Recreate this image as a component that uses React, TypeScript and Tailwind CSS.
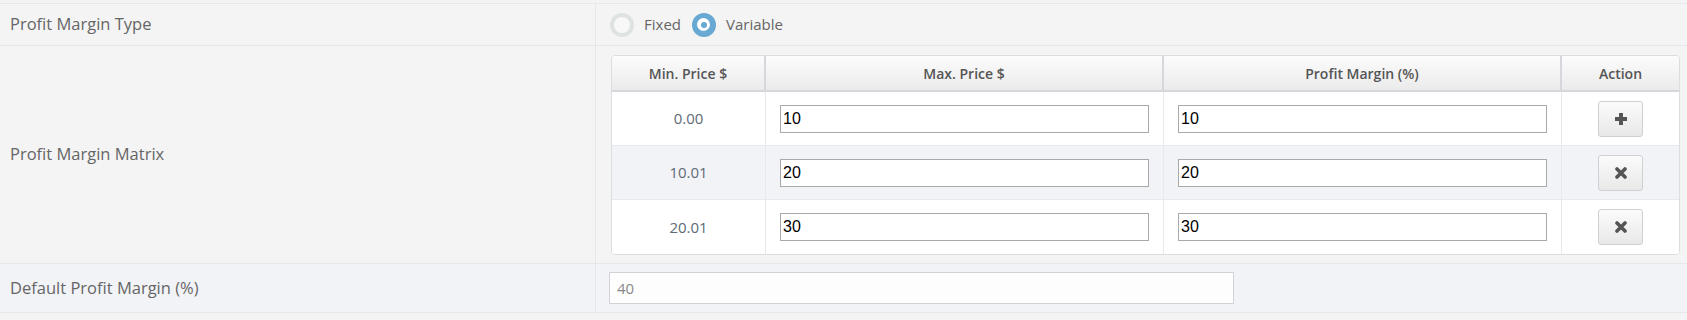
const rows = [
  { min: '0.00', max: '10', margin: '10', action: 'add' },
  { min: '10.01', max: '20', margin: '20', action: 'remove' },
  { min: '20.01', max: '30', margin: '30', action: 'remove' },
];

function PlusIcon() {
  return (
    <svg width="14" height="14" viewBox="0 0 14 14">
      <path d="M7 1v12M1 7h12" stroke="#555" strokeWidth="4" />
    </svg>
  );
}

function TimesIcon() {
  return (
    <svg width="12" height="12" viewBox="0 0 12 12">
      <path d="M2 2l8 8M10 2l-8 8" stroke="#555" strokeWidth="3.6" strokeLinecap="round" />
    </svg>
  );
}

function Radio({ checked }: { checked: boolean }) {
  if (checked) {
    return (
      <span className="flex h-[24px] w-[24px] items-center justify-center rounded-full bg-[#68a9d4]">
        <span className="flex h-[13px] w-[13px] items-center justify-center rounded-full bg-white">
          <span className="h-[6px] w-[6px] rounded-full bg-[#68a9d4]" />
        </span>
      </span>
    );
  }
  return <span className="h-[24px] w-[24px] rounded-full border-[4px] border-[#dfe2e3] bg-[#f8f8f8]" />;
}

function Label({ children }: { children: React.ReactNode }) {
  return (
    <div className="flex w-[596px] shrink-0 items-center border-r border-[#e6e7e9] pl-[10px] text-[16.5px] text-[#666]">
      {children}
    </div>
  );
}

export default function App() {
  return (
    <div className="min-h-[320px] w-full bg-[#f4f4f4] font-['Open_Sans',sans-serif]">
      <div className="h-[3px]" />
      <div className="border-t border-[#e6e7e9]">
        {/* Profit margin type */}
        <div className="flex h-[42px] border-b border-[#e6e7e9]">
          <Label>Profit Margin Type</Label>
          <div className="flex items-center pl-[14px] text-[15px] text-[#666]">
            <Radio checked={false} />
            <span className="ml-[10px]">Fixed</span>
            <span className="ml-[11px]">
              <Radio checked />
            </span>
            <span className="ml-[10px]">Variable</span>
          </div>
        </div>

        {/* Profit margin matrix */}
        <div className="flex h-[218px] border-b border-[#e6e7e9]">
          <Label>Profit Margin Matrix</Label>
          <div className="flex-1 pl-[15px] pr-[7px] pt-[9px]">
            <div className="overflow-hidden rounded-[4px] border border-[#dcdde0] bg-white">
              <div className="grid h-[36px] grid-cols-[154px_398px_398px_1fr] border-b-2 border-[#d6d7dc] bg-linear-to-b from-[#fcfcfc] to-[#ebebeb] text-[14px] font-semibold text-[#555]">
                <div className="flex items-center justify-center border-r-2 border-[#d6d7dc]">Min. Price $</div>
                <div className="flex items-center justify-center border-r-2 border-[#d6d7dc]">Max. Price $</div>
                <div className="flex items-center justify-center border-r-2 border-[#d6d7dc]">Profit Margin (%)</div>
                <div className="flex items-center justify-center">Action</div>
              </div>
              {rows.map((r, i) => (
                <div
                  key={r.min}
                  className={
                    'grid h-[54px] grid-cols-[154px_398px_398px_1fr] ' +
                    (i < rows.length - 1 ? 'border-b border-[#e8e9ec] ' : '') +
                    (i % 2 === 1 ? 'bg-[#f2f3f7]' : 'bg-white')
                  }
                >
                  <div className="flex items-center justify-center border-r border-[#e8e9ec] text-[15px] text-[#606a76]">
                    {r.min}
                  </div>
                  <div className="flex items-center border-r border-[#e8e9ec] px-[14px]">
                    <input
                      defaultValue={r.max}
                      className="h-[28px] w-full border border-[#a9a9a9] bg-white pl-[2px] font-['Liberation_Sans',sans-serif] text-[16px] text-black outline-none"
                    />
                  </div>
                  <div className="flex items-center border-r border-[#e8e9ec] px-[14px]">
                    <input
                      defaultValue={r.margin}
                      className="h-[28px] w-full border border-[#a9a9a9] bg-white pl-[2px] font-['Liberation_Sans',sans-serif] text-[16px] text-black outline-none"
                    />
                  </div>
                  <div className="flex items-center justify-center">
                    <button className="flex h-[36px] w-[45px] items-center justify-center rounded-[3px] border border-[#cfd0d3] bg-linear-to-b from-[#fbfbfb] to-[#e8e8e8]">
                      {r.action === 'add' ? <PlusIcon /> : <TimesIcon />}
                    </button>
                  </div>
                </div>
              ))}
            </div>
          </div>
        </div>

        {/* Default profit margin */}
        <div className="flex h-[49px] border-b border-[#e6e7e9] bg-[#f2f3f7]">
          <Label>Default Profit Margin (%)</Label>
          <div className="flex items-center pl-[13px]">
            <input
              defaultValue="40"
              className="h-[32px] w-[625px] border border-[#d2d3d7] bg-[#fdfdfd] px-[7px] text-[15px] text-[#888] outline-none"
            />
          </div>
        </div>
      </div>
    </div>
  );
}
